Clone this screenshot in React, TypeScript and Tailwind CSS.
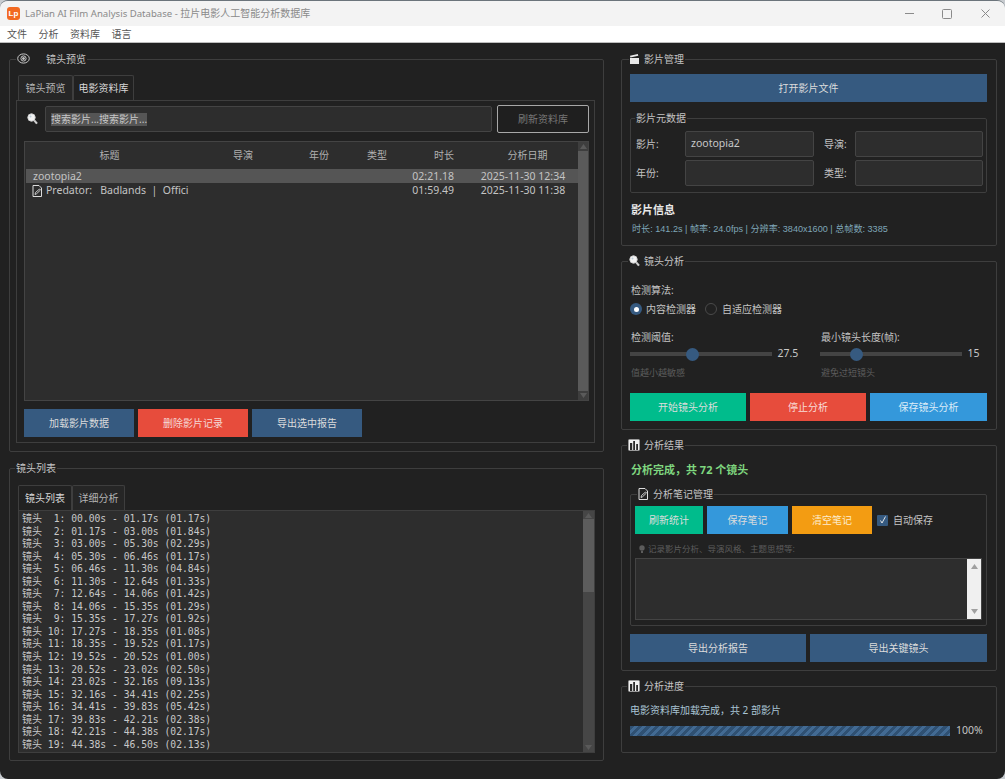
import type { ReactNode } from "react";

const SHOTS = [
  [" 1", "00.00", "01.17", "01.17"],
  [" 2", "01.17", "03.00", "01.84"],
  [" 3", "03.00", "05.30", "02.29"],
  [" 4", "05.30", "06.46", "01.17"],
  [" 5", "06.46", "11.30", "04.84"],
  [" 6", "11.30", "12.64", "01.33"],
  [" 7", "12.64", "14.06", "01.42"],
  [" 8", "14.06", "15.35", "01.29"],
  [" 9", "15.35", "17.27", "01.92"],
  ["10", "17.27", "18.35", "01.08"],
  ["11", "18.35", "19.52", "01.17"],
  ["12", "19.52", "20.52", "01.00"],
  ["13", "20.52", "23.02", "02.50"],
  ["14", "23.02", "32.16", "09.13"],
  ["15", "32.16", "34.41", "02.25"],
  ["16", "34.41", "39.83", "05.42"],
  ["17", "39.83", "42.21", "02.38"],
  ["18", "42.21", "44.38", "02.17"],
  ["19", "44.38", "46.50", "02.13"],
];

const EyeIcon = () => (
  <svg width="13" height="11" viewBox="0 0 13 11" fill="none" stroke="#c8c8c8">
    <ellipse cx="6.5" cy="5.5" rx="5.8" ry="4.6" />
    <circle cx="6.5" cy="5.5" r="2.6" />
    <circle cx="6.5" cy="5.5" r="1" fill="#c8c8c8" />
  </svg>
);

const ClapperIcon = () => (
  <svg width="9" height="10" viewBox="0 0 9 10" fill="#e8e8e8">
    <path d="M0 4h9v6H0z" />
    <path d="M0 1.800 7.800 0l.5 1.700L.4 3.400z" />
  </svg>
);

const SearchIcon = () => (
  <svg width="11" height="12" viewBox="0 0 11 12" fill="none">
    <circle cx="4.5" cy="4.5" r="3.7" fill="#f2f2f2" stroke="#d0d0d0" />
    <path d="M7.2 7.4 10 10.6" stroke="#cfcfcf" strokeWidth="2.2" />
    <circle cx="3.5" cy="3.5" r="1" fill="#b9cbd8" />
  </svg>
);

const ChartIcon = () => (
  <svg width="12" height="12" viewBox="0 0 12 12">
    <rect x="0.5" y="0.5" width="11" height="11" rx="1" fill="#f0f0f0" stroke="#9a9a9a" />
    <path d="M2 4h2.200v7H2zM5.200 2h1.800v9H5.200zM8.200 5h1.800v6H8.200z" fill="#2a2a2a" />
  </svg>
);

const MemoIcon = () => (
  <svg width="11" height="12" viewBox="0 0 11 12" fill="none" stroke="#dcdcdc">
    <path d="M1 .5h6l2.500 2.500v8.500H1z" />
    <path d="M3 9.500l.5-2L7.500 4l1 1-4 3.800z" strokeWidth="0.9" />
  </svg>
);

const BulbIcon = () => (
  <svg width="6" height="8" viewBox="0 0 6 8" fill="#5c5c5c">
    <circle cx="3" cy="3" r="2.700" />
    <path d="M2 6h2v2H2z" />
  </svg>
);

type GroupProps = {
  className: string;
  legendClass: string;
  legend: ReactNode;
  children?: ReactNode;
};

const Group = ({ className, legendClass, legend, children }: GroupProps) => (
  <div className={`relative rounded-[2px] border border-[#3e3e3e] ${className}`}>
    <div className={`absolute top-[-8.500px] flex h-[14px] items-center bg-[#212121] text-[10px] leading-[14px] text-[#c4c4c4] ${legendClass}`}>
      {legend}
    </div>
    {children}
  </div>
);

const Tabs = ({ items, active }: { items: [string, string][]; active: number }) => (
  <div className="flex h-[25px]">
    {items.map(([label, width], i) => (
      <div
        key={label}
        className={`flex items-center justify-center rounded-t-[2px] border border-b-0 border-[#3e3e3e] text-[10px] ${width} ${
          i === active ? "bg-[#212121] text-[#d8d8d8]" : "bg-[#262626] text-[#b4b4b4]"
        }`}
      >
        {label}
      </div>
    ))}
  </div>
);

const Btn = ({ className, children }: { className: string; children: ReactNode }) => (
  <div className={`flex h-[28px] items-center justify-center text-[10px] text-[#dcdcdc] ${className}`}>{children}</div>
);

const Field = ({ value }: { value?: string }) => (
  <div className="flex h-[26px] items-center rounded-[2px] border border-[#444444] bg-[#2d2d2d] pl-[5px] text-[10.500px] text-[#c8c8c8]">
    {value}
  </div>
);

const Slider = ({ thumb, value }: { thumb: string; value: string }) => (
  <div className="flex h-[14px] items-center">
    <div className="relative h-[4px] w-[142px] bg-[#444444]">
      <div className={`absolute top-[-4.500px] h-[13px] w-[13px] rounded-full bg-[#365a80] ${thumb}`} />
    </div>
    <span className="ml-[5.500px] text-[10.500px] text-[#c8c8c8]">{value}</span>
  </div>
);

const ScrollArrow = ({ up, color }: { up?: boolean; color: string }) => (
  <svg width="7" height="5" viewBox="0 0 7 5" fill={color}>
    <path d={up ? "M3.500 0 7 5H0z" : "M0 0h7L3.500 5z"} />
  </svg>
);

export default function App() {
  return (
    <div className="h-[779px] w-[1005px] overflow-hidden bg-[#c8ccd0] font-['Noto_Sans','Noto_Sans_CJK_SC',sans-serif]">
      <div className="flex h-[779px] flex-col overflow-hidden rounded-[8px] border-t border-[#6b747b]">
        {/* Title bar */}
        <div className="flex h-[25px] items-center bg-[#f3f3f3] pl-[7px]">
          <div className="flex h-[13px] w-[13px] items-center justify-center rounded-[3px] bg-[#f26a21] font-['Liberation_Sans',sans-serif] text-[8px] font-bold leading-none text-white">
            Lp
          </div>
          <span className="ml-[5px] text-[9.600px] text-[#8a8a8a]">
            LaPian AI Film Analysis Database - <span className="text-[10px]">拉片电影人工智能分析数据库</span>
          </span>
          <div className="ml-auto flex items-center">
            <svg width="9" height="9" viewBox="0 0 9 9" stroke="#8a8a8a" fill="none" className="mr-[28px]">
              <path d="M0 4.500h9" />
            </svg>
            <svg width="10" height="10" viewBox="0 0 10 10" stroke="#8a8a8a" fill="none" className="mr-[29px]">
              <rect x="0.500" y="0.500" width="9" height="9" rx="1" />
            </svg>
            <svg width="9" height="9" viewBox="0 0 9 9" stroke="#8a8a8a" fill="none" className="mr-[15px]">
              <path d="M.5.500l8 8M8.500.500l-8 8" />
            </svg>
          </div>
        </div>
        {/* Menu */}
        <div className="flex h-[17px] items-center gap-[11.500px] border-b border-[#bdbdbd] bg-white pl-[7px] text-[10px] text-[#555555]">
          <span>文件</span>
          <span>分析</span>
          <span>资料库</span>
          <span>语言</span>
        </div>

        <div className="flex flex-1 gap-[17px] bg-[#212121] pl-[9px] pt-[16px]">
          {/* Left column */}
          <div className="flex w-[595px] flex-col gap-[16px]">
            <Group
              className="h-[393px] pl-[6px] pr-[8px] pt-[15px]"
              legendClass="left-[6px] gap-[16px] px-[1px]"
              legend={<><EyeIcon /><span>镜头预览</span></>}
            >
              <div className="pl-[2px]">
                <Tabs items={[["镜头预览", "w-[55px]"], ["电影资料库", "w-[61px]"]]} active={1} />
              </div>
              <div className="h-[343px] border border-[#3e3e3e] pl-[7px] pr-[5px] pt-[4px]">
                <div className="flex h-[28px] items-center">
                  <div className="flex w-[21px] justify-start pl-[3px]"><SearchIcon /></div>
                  <div className="flex h-[26px] w-[447px] items-center rounded-[2px] border border-[#444444] bg-[#2d2d2d] pl-[5px]">
                    <span className="bg-[#555555] text-[10px] leading-[13px] text-[#c8c8c8]">搜索影片...搜索影片...</span>
                  </div>
                  <div className="ml-[5px] flex h-[28px] w-[92px] items-center justify-center rounded-[2px] border border-[#a8a8a8] bg-[#1f1f1f] text-[10px] text-[#777777]">
                    刷新资料库
                  </div>
                </div>

                {/* Film table */}
                <div className="mt-[8px] flex h-[260px] w-[565px] border border-[#444444] bg-[#2d2d2d] text-[#c4c4c4]">
                  <div className="w-[553px] pl-[1px]">
                    <div className="grid h-[27px] grid-cols-[167px_100px_52px_64px_68px_101px] items-center text-[10px] text-[#b0b0b0]">
                      <span className="text-center">标题</span>
                      <span className="text-center">导演</span>
                      <span className="text-center">年份</span>
                      <span className="text-center">类型</span>
                      <span className="pr-[23px] text-right">时长</span>
                      <span className="text-center">分析日期</span>
                    </div>
                    <div className="grid h-[14px] grid-cols-[383px_68px_101px] items-center bg-[#555555] text-[10.500px]">
                      <span className="pl-[7px]">zootopia2</span>
                      <span className="pr-[23px] text-right">02:21.18</span>
                      <span className="pr-[9px] text-center">2025-11-30 12:34</span>
                    </div>
                    <div className="grid h-[14px] grid-cols-[383px_68px_101px] items-center text-[10.500px]">
                      <span className="flex items-center gap-[3px] whitespace-pre pl-[6px]">
                        <MemoIcon />
                        <span>Predator:   Badlands  |  Offici</span>
                      </span>
                      <span className="pr-[23px] text-right">01:59.49</span>
                      <span className="pr-[9px] text-center">2025-11-30 11:38</span>
                    </div>
                  </div>
                  <div className="flex w-[10px] flex-col items-center bg-[#3e3e3e]">
                    <div className="flex h-[9px] items-center"><ScrollArrow up color="#5a5a5a" /></div>
                    <div className="h-[240px] w-full bg-[#5a5a5a]" />
                    <div className="flex h-[9px] items-center"><ScrollArrow color="#5a5a5a" /></div>
                  </div>
                </div>

                <div className="mt-[8px] flex gap-[4px]">
                  <Btn className="w-[110px] bg-[#365a80]">加载影片数据</Btn>
                  <Btn className="w-[110px] bg-[#e74c3c] text-[#f5d8d5]">删除影片记录</Btn>
                  <Btn className="w-[110px] bg-[#365a80]">导出选中报告</Btn>
                </div>
              </div>
            </Group>

            <Group
              className="h-[293px] px-[8px] pt-[16px]"
              legendClass="left-[5px] px-[1px]"
              legend={<span>镜头列表</span>}
            >
              <Tabs items={[["镜头列表", "w-[54px]"], ["详细分析", "w-[53px]"]]} active={0} />
              <div className="flex h-[243px] w-[577px] border border-[#3e3e3e] bg-[#2d2d2d]">
                <div className="h-[240px] w-[564px] overflow-hidden pl-[3px] pt-[1px] font-['DejaVu_Sans_Mono','Noto_Sans_CJK_SC',monospace] text-[9.700px] text-[#c8c8c8]">
                  {SHOTS.map(([n, a, b, d]) => (
                    <div key={n} className="h-[12.560px] whitespace-pre leading-[12.560px]">
                      <span className="font-['Noto_Sans_CJK_SC',sans-serif] text-[10px] leading-[12px]">镜头</span>
                      {` ${n}: ${a}s - ${b}s (${d}s)`}
                    </div>
                  ))}
                </div>
                <div className="flex w-[11px] flex-col items-center bg-[#464646]">
                  <div className="flex h-[8px] items-center"><ScrollArrow up color="#5a5a5a" /></div>
                  <div className="h-[73px] w-full bg-[#5c5c5c]" />
                  <div className="mt-auto flex h-[9px] items-center"><ScrollArrow color="#5a5a5a" /></div>
                </div>
              </div>
            </Group>
          </div>

          {/* Right column */}
          <div className="flex w-[376px] flex-col gap-[15px]">
            <Group
              className="h-[187px] px-[8px] pt-[14px]"
              legendClass="left-[7px] gap-[5px] px-[1px]"
              legend={<><ClapperIcon /><span>影片管理</span></>}
            >
              <Btn className="w-[357px] bg-[#365a80]">打开影片文件</Btn>
              <Group
                className="mt-[16px] h-[75px] w-[357px] px-[5px] pt-[12px]"
                legendClass="left-[4px] px-[1px]"
                legend={<span>影片元数据</span>}
              >
                <div className="grid grid-cols-[49px_129px_41px_128px] gap-y-[3px] text-[10px] text-[#c4c4c4]">
                  <span className="self-center">影片:</span>
                  <Field value="zootopia2" />
                  <span className="self-center pl-[10px]">导演:</span>
                  <Field />
                  <span className="self-center">年份:</span>
                  <Field />
                  <span className="self-center pl-[10px]">类型:</span>
                  <Field />
                </div>
              </Group>
              <div className="ml-[1px] mt-[10px] text-[11px] font-bold leading-[14px] text-[#e8e8e8]">影片信息</div>
              <div className="ml-[2px] mt-[6px] font-['Liberation_Sans','Noto_Sans_CJK_SC',sans-serif] text-[9.100px] leading-[12px] text-[#7fa6b8]">
                时长: 141.2s | 帧率: 24.0fps | 分辨率: 3840x1600 | 总帧数: 3385
              </div>
            </Group>

            <Group
              className="h-[169px] px-[8px] pt-[21px]"
              legendClass="left-[6px] gap-[4px] px-[1px]"
              legend={<><SearchIcon /><span>镜头分析</span></>}
            >
              <div className="pl-[1px] text-[10px] leading-[14px] text-[#c4c4c4]">检测算法:</div>
              <div className="mt-[5px] flex h-[14px] items-center text-[10px] text-[#c4c4c4]">
                <span className="flex h-[12px] w-[12px] items-center justify-center rounded-full bg-[#365a80]">
                  <span className="h-[5px] w-[5px] rounded-full bg-white" />
                </span>
                <span className="ml-[4px]">内容检测器</span>
                <span className="ml-[9px] h-[12px] w-[12px] rounded-full border border-[#4a4a4a]" />
                <span className="ml-[5px]">自适应检测器</span>
              </div>
              <div className="mt-[14px] grid grid-cols-[190px_1fr]">
                <div>
                  <div className="pl-[1px] text-[10px] leading-[14px] text-[#c4c4c4]">检测阈值:</div>
                  <div className="mt-[3px]"><Slider thumb="left-[56px]" value="27.5" /></div>
                  <div className="mt-[6px] pl-[1px] text-[9px] leading-[12px] text-[#5c5c5c]">值越小越敏感</div>
                </div>
                <div>
                  <div className="pl-[1px] text-[10px] leading-[14px] text-[#c4c4c4]">最小镜头长度(帧):</div>
                  <div className="mt-[3px]"><Slider thumb="left-[30px]" value="15" /></div>
                  <div className="mt-[6px] pl-[1px] text-[9px] leading-[12px] text-[#5c5c5c]">避免过短镜头</div>
                </div>
              </div>
              <div className="mt-[14px] flex gap-[4px]">
                <Btn className="w-[116px] bg-[#00bc8c] text-[#d6f5ec]">开始镜头分析</Btn>
                <Btn className="w-[116px] bg-[#e74c3c] text-[#f8dcd8]">停止分析</Btn>
                <Btn className="w-[117px] bg-[#3498db] text-[#dcecf8]">保存镜头分析</Btn>
              </div>
            </Group>

            <Group
              className="h-[226px] px-[8px] pt-[17px]"
              legendClass="left-[5px] gap-[4px] px-[1px]"
              legend={<><ChartIcon /><span>分析结果</span></>}
            >
              <div className="ml-[1px] text-[11px] font-bold leading-[14px] text-[#7fd67f]">分析完成，共 72 个镜头</div>
              <Group
                className="mt-[17px] h-[132px] w-[357px] px-[4px] pt-[11px]"
                legendClass="left-[6px] gap-[4px] px-[1px]"
                legend={<><MemoIcon /><span>分析笔记管理</span></>}
              >
                <div className="flex gap-[4px]">
                  <Btn className="w-[68px] bg-[#00bc8c] text-[#c8f2e6]">刷新统计</Btn>
                  <Btn className="w-[81px] bg-[#3498db] text-[#d6e9f7]">保存笔记</Btn>
                  <Btn className="w-[80px] bg-[#f39c12] text-[#fdeccd]">清空笔记</Btn>
                  <div className="ml-[1px] flex items-center text-[10px] text-[#c4c4c4]">
                    <span className="flex h-[11px] w-[11px] items-center justify-center rounded-[1px] bg-[#365a80]">
                      <svg width="8" height="8" viewBox="0 0 8 8" fill="none" stroke="#e4e4e4">
                        <path d="M1.500 4.500 3 7l3.500-6.500" />
                      </svg>
                    </span>
                    <span className="ml-[5px]">自动保存</span>
                  </div>
                </div>
                <div className="mt-[9px] flex h-[12px] items-center gap-[3px] pl-[4px] text-[8.500px] text-[#5c5c5c]">
                  <BulbIcon />
                  <span>记录影片分析、导演风格、主题思想等:</span>
                </div>
                <div className="mt-[3px] flex h-[62px] w-[347px] border border-[#444444] bg-[#2d2d2d]">
                  <div className="flex-1" />
                  <div className="flex w-[14px] flex-col items-center justify-between bg-[#f0f0f0] py-[5px]">
                    <ScrollArrow up color="#a0a0a0" />
                    <ScrollArrow color="#a0a0a0" />
                  </div>
                </div>
              </Group>
              <div className="mt-[8px] flex gap-[4px]">
                <Btn className="w-[176px] bg-[#365a80]">导出分析报告</Btn>
                <Btn className="w-[177px] bg-[#365a80]">导出关键镜头</Btn>
              </div>
            </Group>

            <Group
              className="h-[67px] px-[8px] pt-[16px]"
              legendClass="left-[5px] gap-[4px] px-[1px]"
              legend={<><ChartIcon /><span>分析进度</span></>}
            >
              <div className="text-[10px] leading-[14px] text-[#a9c4d4]">电影资料库加载完成，共 2 部影片</div>
              <div className="mt-[6px] flex items-center">
                <div className="h-[10px] w-[320px] bg-[repeating-linear-gradient(135deg,#2f5072_0px,#2f5072_3px,#426a93_3px,#426a93_6px)]" />
                <span className="ml-[6px] text-[10.500px] text-[#c4c4c4]">100%</span>
              </div>
            </Group>
          </div>
        </div>
      </div>
    </div>
  );
}
